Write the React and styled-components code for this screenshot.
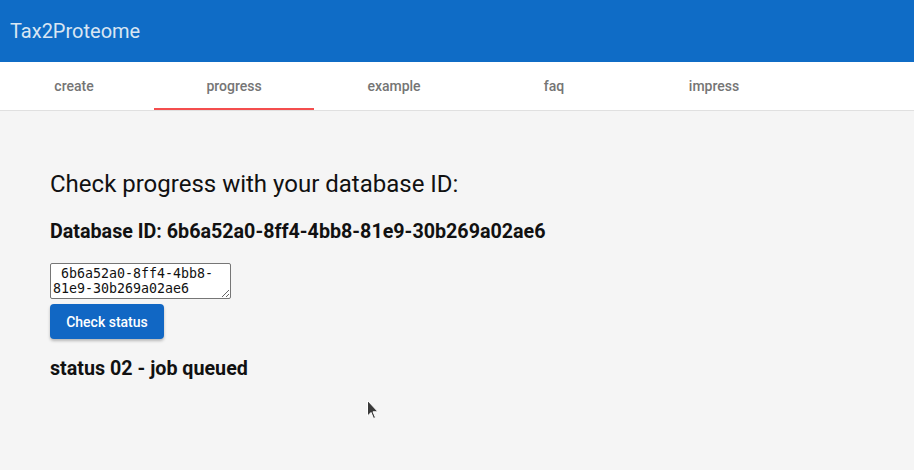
import styled, { createGlobalStyle } from "styled-components";

const GlobalStyle = createGlobalStyle`
  html, body {
    margin: 0;
    padding: 0;
    background: #f5f5f5;
    font-family: Roboto, "Liberation Sans", sans-serif;
  }
`;

const Page = styled.div`
  position: relative;
  min-height: 470px;
  background: #f5f5f5;
`;

const AppBar = styled.header`
  height: 62px;
  background: #0f6cc6;
  display: flex;
  align-items: center;
  padding: 0 10px;
`;

const Title = styled.div`
  color: #d9e6f3;
  font-size: 20px;
  font-weight: 400;
`;

const TabBar = styled.nav`
  height: 48px;
  background: #fff;
  border-bottom: 1px solid #e0e0e0;
  display: flex;
`;

const TabList = styled.div`
  display: flex;
  margin-left: -6px;
`;

const Tab = styled.div`
  width: 160px;
  height: 48px;
  box-sizing: border-box;
  display: flex;
  align-items: center;
  justify-content: center;
  font-size: 14px;
  font-weight: 500;
  color: #757575;
  border-bottom: 2px solid ${(p) => (p.active ? "#f44e4e" : "transparent")};
  padding-top: 2px;
`;

const Content = styled.main`
  padding: 39px 50px 0;
`;

const Heading = styled.h2`
  margin: 20px 0 0;
  font-size: 24px;
  font-weight: 400;
  color: #111;
  line-height: 28px;
`;

const IdLine = styled.h3`
  margin: 22px 0 0;
  font-size: 19.7px;
  font-weight: 700;
  color: #111;
  line-height: 24px;
`;

const IdInput = styled.textarea`
  display: block;
  margin-top: 19px;
  width: 181px;
  height: 36px;
  box-sizing: border-box;
  padding: 2px 2px 1px;
  border: 1px solid #767676;
  border-radius: 2px;
  font-family: "DejaVu Sans Mono", monospace;
  font-size: 13.3px;
  line-height: 15px;
  color: #111;
  background: #fff;
`;

const Button = styled.button`
  display: block;
  margin-top: 5px;
  width: 114px;
  height: 35px;
  border: none;
  border-radius: 4px;
  background: #1167c4;
  color: #fff;
  font-family: Roboto, "Liberation Sans", sans-serif;
  font-size: 14px;
  font-weight: 500;
  box-shadow: 0 2px 3px rgba(0, 0, 0, 0.25);
  cursor: pointer;
`;

const Status = styled.h3`
  margin: 18px 0 0;
  font-size: 19.7px;
  font-weight: 700;
  color: #111;
  line-height: 24px;
`;

const Cursor = styled.svg`
  position: absolute;
  left: 366px;
  top: 399px;
`;

const tabs = ["create", "progress", "example", "faq", "impress"];
const dbId = "6b6a52a0-8ff4-4bb8-81e9-30b269a02ae6";

export default function App() {
  return (
    <Page>
      <GlobalStyle />
      <AppBar>
        <Title>Tax2Proteome</Title>
      </AppBar>
      <TabBar>
        <TabList>
          {tabs.map((t) => (
            <Tab key={t} active={t === "progress"}>
              {t}
            </Tab>
          ))}
        </TabList>
      </TabBar>
      <Content>
        <Heading>Check progress with your database ID:</Heading>
        <IdLine>Database ID: {dbId}</IdLine>
        <IdInput defaultValue={" " + dbId} spellCheck />
        <Button>Check status</Button>
        <Status>status 02 - job queued</Status>
      </Content>
      <Cursor width="14" height="22" viewBox="0 0 14 22">
        <path
          d="M1.5 1.5 L1.5 17 L5 13.5 L7.5 19.5 L9.5 18.6 L7 12.8 L12 12.8 Z"
          fill="#3a3a3a"
          stroke="#fff"
          strokeWidth="1"
          strokeLinejoin="round"
        />
      </Cursor>
    </Page>
  );
}
